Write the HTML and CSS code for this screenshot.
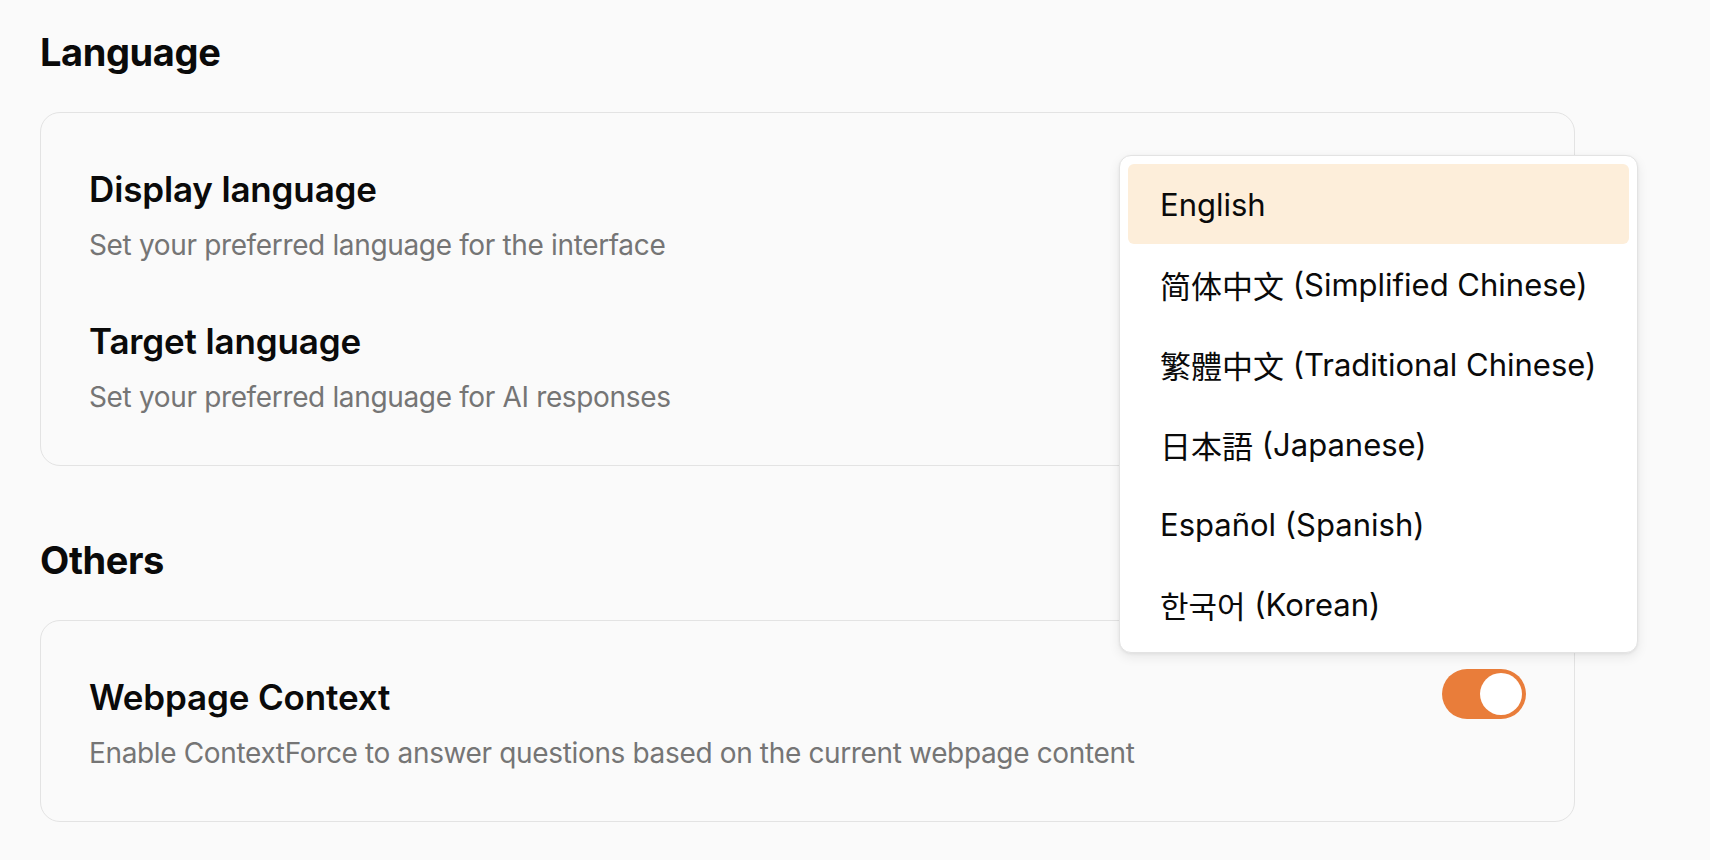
FILE: index.html
```html
<!DOCTYPE html>
<html lang="en">
<head>
<meta charset="utf-8">
<title>Settings</title>
<link rel="stylesheet" href="styles.css">
</head>
<body>
<main class="page">
  <section class="section">
    <h2 class="section-title">Language</h2>
    <div class="card">
      <div class="setting">
        <div class="setting-text">
          <div class="setting-name">Display language</div>
          <div class="setting-desc">Set your preferred language for the interface</div>
        </div>
      </div>
      <div class="setting">
        <div class="setting-text">
          <div class="setting-name">Target language</div>
          <div class="setting-desc">Set your preferred language for AI responses</div>
        </div>
      </div>
    </div>
  </section>
  <section class="section">
    <h2 class="section-title">Others</h2>
    <div class="card">
      <div class="setting">
        <div class="setting-text">
          <div class="setting-name">Webpage Context</div>
          <div class="setting-desc">Enable ContextForce to answer questions based on the current webpage content</div>
        </div>
        <div class="toggle is-on" role="switch" aria-checked="true"><span class="knob"></span></div>
      </div>
    </div>
  </section>

  <ul class="menu" role="listbox">
    <li class="menu-item is-active">English</li>
    <li class="menu-item"><span lang="zh-CN">简体中文</span> (Simplified Chinese)</li>
    <li class="menu-item"><span lang="zh-TW">繁體中文</span> (Traditional Chinese)</li>
    <li class="menu-item"><span lang="ja">日本語</span> (Japanese)</li>
    <li class="menu-item">Español (Spanish)</li>
    <li class="menu-item"><span lang="ko">한국어</span> (Korean)</li>
  </ul>
</main>
</body>
</html>
```
FILE: styles.css
```css
* { box-sizing: border-box; }
html, body {
  margin: 0;
  padding: 0;
  background: #fafafa;
}
body {
  font-family: Inter, "Noto Sans CJK SC", sans-serif;
  color: #0a0a0a;
}
.page {
  position: relative;
  width: 1575px;
  padding: 24px 0 0 40px;
}
.section + .section { margin-top: 66px; }
.section-title {
  margin: 0 0 32px;
  font-size: 38px;
  line-height: 56px;
  font-weight: 700;
  letter-spacing: -0.4px;
}
.card {
  border: 1px solid #e3e3e3;
  border-radius: 20px;
  background: #fafafa;
  padding: 48px;
  display: flex;
  flex-direction: column;
  gap: 48px;
}
.setting {
  display: flex;
  justify-content: space-between;
  align-items: flex-start;
}
.setting-text {
  display: flex;
  flex-direction: column;
  gap: 8px;
}
.setting-name {
  font-size: 35px;
  line-height: 56px;
  font-weight: 600;
  letter-spacing: -0.15px;
}
.setting-desc {
  font-size: 28px;
  line-height: 40px;
  color: #757575;
  letter-spacing: -0.35px;
}
.toggle {
  width: 84px;
  height: 50px;
  border-radius: 25px;
  background: #e97d3a;
  padding: 4px;
  display: flex;
  justify-content: flex-end;
}
.knob {
  width: 42px;
  height: 42px;
  border-radius: 50%;
  background: #fff;
}
.menu {
  position: absolute;
  left: 1119px;
  top: 155px;
  width: 519px;
  margin: 0;
  padding: 8px;
  list-style: none;
  background: #fff;
  border: 1px solid #e3e3e3;
  border-radius: 12px;
  box-shadow: 0 4px 12px rgba(0,0,0,0.08), 0 1px 3px rgba(0,0,0,0.06);
}
.menu-item {
  height: 80px;
  display: flex;
  align-items: center;
  padding: 0 32px;
  font-size: 31px;
  border-radius: 6px;
  color: #0a0a0a;
  white-space: pre;
}
.menu-item.is-active { background: #fdeeda; }
:lang(zh-TW) { font-family: "Noto Sans CJK TC", sans-serif; }
:lang(ja) { font-family: "Noto Sans CJK JP", sans-serif; }
:lang(ko) { font-family: "Noto Sans CJK KR", sans-serif; }
```
